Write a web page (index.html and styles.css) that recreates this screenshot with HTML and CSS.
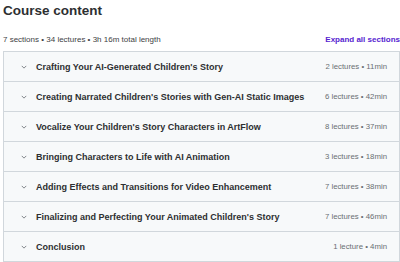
FILE: index.html
```html
<!DOCTYPE html>
<html lang="en">
<head>
    <meta charset="UTF-8">
    <title>Course content</title>
    <link rel="stylesheet" href="styles.css">
</head>
<body>
    <div class="title">Course content</div>
    <div class="meta">
        <span>7 sections • 34 lectures • 3h 16m total length</span>
        <span class="expand">Expand all sections</span>
    </div>
    <div class="sections">
        <div class="row"><svg class="chev" viewBox="0 0 8 5"><path d="M1 1l3 3 3-3"/></svg><span class="name">Crafting Your AI-Generated Children's Story</span><span class="info">2 lectures • 11min</span></div>
        <div class="row"><svg class="chev" viewBox="0 0 8 5"><path d="M1 1l3 3 3-3"/></svg><span class="name">Creating Narrated Children's Stories with Gen-AI Static Images</span><span class="info">6 lectures • 42min</span></div>
        <div class="row"><svg class="chev" viewBox="0 0 8 5"><path d="M1 1l3 3 3-3"/></svg><span class="name">Vocalize Your Children's Story Characters in ArtFlow</span><span class="info">8 lectures • 37min</span></div>
        <div class="row"><svg class="chev" viewBox="0 0 8 5"><path d="M1 1l3 3 3-3"/></svg><span class="name">Bringing Characters to Life with AI Animation</span><span class="info">3 lectures • 18min</span></div>
        <div class="row"><svg class="chev" viewBox="0 0 8 5"><path d="M1 1l3 3 3-3"/></svg><span class="name">Adding Effects and Transitions for Video Enhancement</span><span class="info">7 lectures • 38min</span></div>
        <div class="row"><svg class="chev" viewBox="0 0 8 5"><path d="M1 1l3 3 3-3"/></svg><span class="name">Finalizing and Perfecting Your Animated Children's Story</span><span class="info">7 lectures • 46min</span></div>
        <div class="row"><svg class="chev" viewBox="0 0 8 5"><path d="M1 1l3 3 3-3"/></svg><span class="name">Conclusion</span><span class="info">1 lecture • 4min</span></div>
    </div>
</body>
</html>
```
FILE: styles.css
```css
body {
    margin: 0;
    padding: 0 0 0 3px;
    font-family: "Liberation Sans", Arial, sans-serif;
    color: #2d2f31;
    background: #fff;
}
.title {
    margin-top: 2px;
    font-size: 13.5px;
    line-height: 17px;
    font-weight: bold;
}
.meta {
    display: flex;
    justify-content: space-between;
    align-items: center;
    height: 20px;
    margin-top: 10px;
    font-size: 8px;
    color: #3e4143;
}
.expand {
    color: #5624d0;
    font-weight: bold;
    white-space: nowrap;
}
.sections {
    margin-top: 2px;
    border: 1px solid #d1d7dc;
}
.row {
    display: flex;
    align-items: center;
    height: 29px;
    background: #f7f9fa;
    border-bottom: 1px solid #d1d7dc;
    padding: 0 12px 0 17px;
}
.row:last-child {
    border-bottom: none;
}
.chev {
    width: 6px;
    height: 4px;
    margin-right: 9px;
    fill: none;
    stroke: #6a6f73;
    stroke-width: 1.1;
}
.name {
    flex: 1;
    font-weight: bold;
    font-size: 9px;
}
.info {
    color: #6a6f73;
    font-size: 7.8px;
}
```
